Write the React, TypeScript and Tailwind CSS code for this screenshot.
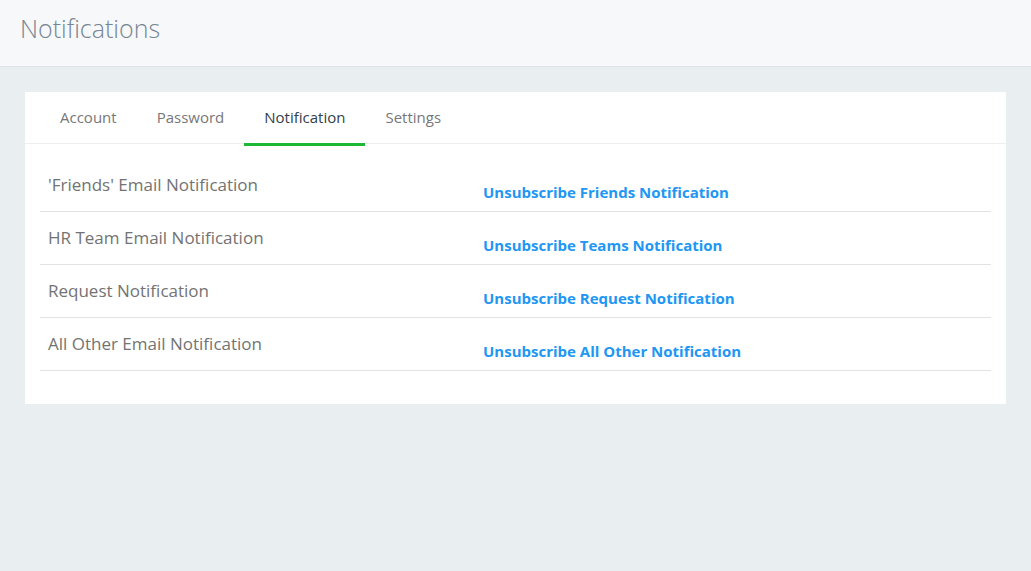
const tabs = ["Account", "Password", "Notification", "Settings"];

const rows = [
  { label: "'Friends' Email Notification", link: "Unsubscribe Friends Notification" },
  { label: "HR Team Email Notification", link: "Unsubscribe Teams Notification" },
  { label: "Request Notification", link: "Unsubscribe Request Notification" },
  { label: "All Other Email Notification", link: "Unsubscribe All Other Notification" },
];

export default function App() {
  return (
    <div className="min-h-[571px] bg-[#e9eef1] font-['Open_Sans',sans-serif]">
      <div className="h-[67px] bg-[#f6f8f9] border-b border-[#dde3e7] px-5 flex items-center">
        <h1 className="text-[25px] font-light text-[#768593] leading-none -mt-[10px]">Notifications</h1>
      </div>

      <div className="px-[25px] pt-[25px]">
        <div className="bg-white">
          <div className="flex px-[15px] border-b border-[#eeeeee] h-[52px]">
            {tabs.map((t) => (
              <div
                key={t}
                className={
                  t === "Notification"
                    ? "px-[20px] flex items-center text-[15px] text-[#333f4a] border-b-[3px] border-[#1cb836] -mb-[1px] h-[54px] pb-[1px]"
                    : "px-[20px] flex items-center text-[15px] text-[#77777a] h-[52px] pb-[2px]"
                }
              >
                {t}
              </div>
            ))}
          </div>

          <div className="px-[15px] pt-[15px] pb-[33px]">
            {rows.map((r) => (
              <div key={r.label} className="flex h-[53px] border-b border-[#e3e3e3]">
                <div className="w-[443px] pl-[8px] pt-[14px] text-[17px] text-[#737373] leading-[24px]">
                  {r.label}
                </div>
                <a className="pt-[23px] text-[15px] font-bold text-[#2196f3] leading-[20px]">{r.link}</a>
              </div>
            ))}
          </div>
        </div>
      </div>
    </div>
  );
}
